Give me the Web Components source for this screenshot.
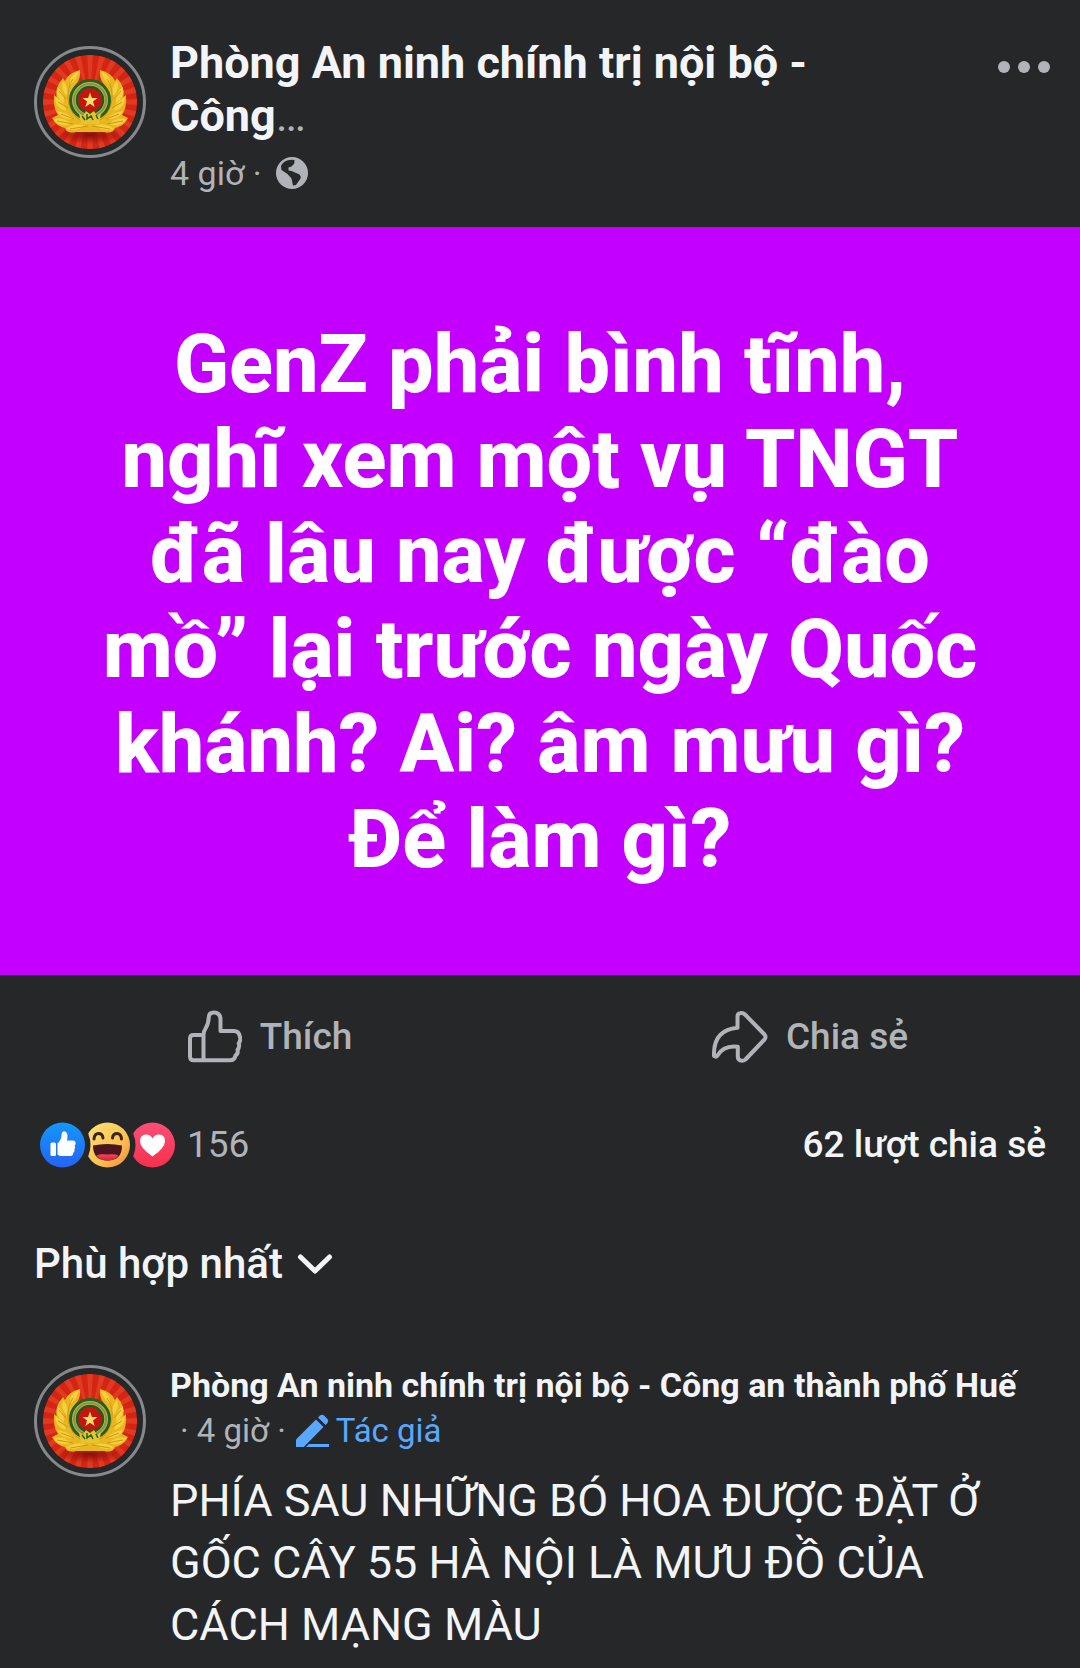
<!DOCTYPE html>
<html lang="vi">
<head>
<meta charset="utf-8">
<meta name="viewport" content="width=device-width, initial-scale=1">
<title>Phòng An ninh chính trị nội bộ</title>
<style>
  :root {
    --bg: #252728;
    --text: #f2f4f7;
    --muted: #b0b3b8;
    --link: #5aa7ff;
    --banner: #c300ff;
  }
  body {
    margin: 0;
    background: var(--bg);
    color: var(--text);
    font-family: Roboto, "Noto Sans", sans-serif;
  }
</style>
</head>
<body>

<feed-post>
  <post-header slot="header" time="4 giờ">Phòng An ninh chính trị nội bộ - Công</post-header>
  <post-banner slot="content">GenZ phải bình tĩnh, nghĩ xem một vụ TNGT đã lâu nay được “đào mồ” lại trước ngày Quốc khánh? Ai? âm mưu gì? Để làm gì?</post-banner>
  <action-button slot="actions" icon="like">Thích</action-button>
  <action-button slot="actions" icon="share">Chia sẻ</action-button>
  <reaction-summary slot="summary" count="156">62 lượt chia sẻ</reaction-summary>
  <sort-select slot="comments">Phù hợp nhất</sort-select>
  <post-comment slot="comments" author="Phòng An ninh chính trị nội bộ - Công an thành phố Huế" time="4 giờ" badge="Tác giả">PHÍA SAU NHỮNG BÓ HOA ĐƯỢC ĐẶT Ở GỐC CÂY 55 HÀ NỘI LÀ MƯU ĐỒ CỦA CÁCH MẠNG MÀU</post-comment>
</feed-post>

<script>
const RESET = `
  *, *::before, *::after { box-sizing: border-box; }
  button, select {
    margin: 0;
    padding: 0;
    border: 0;
    background: none;
    color: inherit;
    font: inherit;
    cursor: pointer;
  }
  a { color: inherit; text-decoration: none; }
  svg { display: block; flex: none; }
`

const ICONS = {
  like: `
    <svg width="54" height="54" viewBox="0 0 54 54" fill="none" stroke="currentColor" stroke-width="4" stroke-linejoin="round" stroke-linecap="round">
      <path d="M15.5 25H5.500Q2 25 2 28.500V46.500Q2 50.300 5.500 50.300H42Q46.500 50.300 47.500 45.500Q50.500 43.500 49.500 39.800Q52 37 50.700 33.400Q53.200 30 51.800 26.500Q51 21 46 21H32.500V10Q32.500 2.500 26 2.500Q21 2.500 20.800 7Q20.500 14 17.500 18.500Q15.500 21.500 15.500 25V50"/>
    </svg>`,
  share: `
    <svg width="56" height="54" viewBox="0 0 56 54" fill="none" stroke="currentColor" stroke-width="4" stroke-linejoin="round" stroke-linecap="round">
      <path d="M25.500 17.800V6.500Q25.500 3.500 28.500 3Q31 2.500 33 4.500L52.500 24.500Q54.500 27 52.500 29.500L33.500 49.500Q31 51.500 28.500 50.500Q25.800 49.500 25.800 46.500V36.700Q11.500 35 5.500 45.500Q4 47.500 2 46Q1 20 25.500 17.800Z"/>
    </svg>`,
  more: `
    <svg width="52" height="12" viewBox="0 0 52 12" fill="currentColor">
      <circle cx="6" cy="6" r="6"/><circle cx="26" cy="6" r="6"/><circle cx="46" cy="6" r="6"/>
    </svg>`,
  globe: `
    <svg width="32" height="32" viewBox="0 0 32 32">
      <circle cx="16" cy="16" r="16" fill="currentColor"/>
      <path fill="var(--bg)" d="M5 9Q6.500 5 11 3.500Q15 2.500 18.500 3L18.300 6.500L15.500 9.500L12.500 10.500V13.500L15.500 14L23.500 17.500Q25.500 19.500 24.200 22L20 28L17 28.500L15.500 21.500L11.500 17L5.500 13Z"/>
    </svg>`,
  chevron: `
    <svg width="36" height="22" viewBox="0 0 36 22" fill="none" stroke="currentColor" stroke-width="5" stroke-linecap="round" stroke-linejoin="round">
      <path d="M3.500 4L18 18L32.500 4"/>
    </svg>`,
  pencil: `
    <svg width="34" height="34" viewBox="0 0 34 34" fill="currentColor">
      <path d="M0 33V25.500L20 5.500L27.500 13L7.800 33Z"/>
      <path d="M22 3.500L24 1.500Q26 0 28 1.500L31.500 5Q33 7 31.500 9L29.500 11Z"/>
      <path d="M13 30H33V33H10Z"/>
    </svg>`
}

const REACTIONS = `
  <svg width="135" height="46" viewBox="0 0 135 46" role="img" aria-label="Thích, Haha, Yêu thích">
    <defs>
      <linearGradient id="blue" x1="0" y1="0" x2="0" y2="1">
        <stop offset="0" stop-color="#1398fb"/><stop offset="1" stop-color="#2563f3"/>
      </linearGradient>
      <linearGradient id="yellow" x1="0" y1="0" x2="1" y2="1">
        <stop offset="0" stop-color="#ffe27a"/><stop offset=".6" stop-color="#fcc352"/><stop offset="1" stop-color="#f08a35"/>
      </linearGradient>
      <linearGradient id="red" x1="0" y1="0" x2="0" y2="1">
        <stop offset="0" stop-color="#fb4f78"/><stop offset="1" stop-color="#f5304c"/>
      </linearGradient>
      <linearGradient id="tongue" x1="0" y1="0" x2="0" y2="1">
        <stop offset="0" stop-color="#f5485c"/><stop offset="1" stop-color="#d81f3c"/>
      </linearGradient>
      <mask id="cut"><path fill="#fff" d="M0 0H46V46H0Z"/><circle cx="-22.500" cy="23" r="28"/></mask>
    </defs>
    <circle cx="22.500" cy="23" r="22.500" fill="url(#blue)"/>
    <g fill="#fff">
      <rect x="10.500" y="20.500" width="5.500" height="13.500" rx="1.500"/>
      <path d="M17.500 21.500Q21.500 18 21.700 12Q22 9.300 24 9.300Q27.500 9.800 27.500 14.500Q27.500 17 26.800 18.500H33Q35.800 18.800 35.600 21.500Q35.500 23 34.600 23.600Q36 25.500 34.400 27.300Q35.200 29.500 33.300 30.700Q33.300 34 30 34H22Q19 34 17.500 32.500Z"/>
    </g>
    <g transform="translate(45 0)">
      <g mask="url(#cut)"><circle cx="22.500" cy="23" r="22.500" fill="url(#yellow)"/></g>
      <g fill="none" stroke="#3b2418" stroke-width="3" stroke-linecap="round">
        <path d="M9 17Q9.500 11.500 13.500 11.500Q17.500 11.500 18 16"/>
        <path d="M27.500 16Q28 11.500 32 11.500Q36 11.500 36.500 17"/>
      </g>
      <path fill="#4b1620" d="M8 23.500Q22.500 20.500 37 23.500Q37 38.500 22.500 38.500Q8 38.500 8 23.500Z"/>
      <path fill="url(#tongue)" d="M11.500 33.500Q15 31.500 22.500 32.500Q30 31.500 33.500 33.500Q30 38.500 22.500 38.500Q15 38.500 11.500 33.500Z"/>
    </g>
    <g transform="translate(90 0)">
      <g mask="url(#cut)"><circle cx="22.500" cy="23" r="22.500" fill="url(#red)"/></g>
      <path fill="#fff" d="M22.500 34.500Q10 26 10 19Q10.200 12.800 16 12.600Q20.500 12.600 22.500 16.500Q24.500 12.600 29 12.600Q35 12.800 35 19Q35 26 22.500 34.500Z"/>
    </g>
  </svg>`

function emblemRays() {
  let rays = ''
  for (let i = 0; i < 24; i++) {
    rays += `<path d="M57 57L54 8H60Z" transform="rotate(${i * 15} 57 57)"/>`
  }
  return rays
}

const WING = `
  <path fill="#e9b620" d="M47 25Q35 28 32 36L30 33Q22 42 23.500 52L21 50Q20 63 25 70L19 73Q23 81 32 83Q34 89 43 87H57V77Q38 71 38 54Q38 44 44 38Q48 32 47 25Z"/>
  <g fill="#f3d03f">
    <path d="M46 26Q36 30 37 40Q44 35 46 26Z"/>
    <path d="M30 36Q27 45 34 51Q36 42 30 36Z"/>
    <path d="M24 42Q22 52 31 58Q32 48 24 42Z"/>
    <path d="M22 52Q22 63 33 66Q32 57 22 52Z"/>
    <path d="M24 66Q28 75 40 74Q34 67 24 66Z"/>
    <path d="M20 74Q31 72 38 79Q27 83 20 74Z"/>
    <path d="M33 84Q40 78 52 80Q45 87 33 84Z"/>
  </g>
  <g fill="none" stroke="#cf9716" stroke-width="1">
    <path d="M40 34Q34 42 35 55Q37 70 50 77"/>
    <path d="M26 46L33 54M25 57L35 63M28 69L41 74M24 76L40 79M37 84L55 81"/>
  </g>`

class FeedPost extends HTMLElement {
  constructor() {
    super()
    this.attachShadow({ mode: 'open' })
    this.shadowRoot.innerHTML = `
      <style>
        ${RESET}
        :host { display: block; }
        .actions {
          display: grid;
          grid-template-columns: 1fr 1fr;
          padding: 32px 0;
        }
      </style>
      <article>
        <slot name="header"></slot>
        <slot name="content"></slot>
        <div class="actions"><slot name="actions"></slot></div>
        <slot name="summary"></slot>
        <section><slot name="comments"></slot></section>
      </article>
    `
  }
}

class UserAvatar extends HTMLElement {
  constructor() {
    super()
    this.attachShadow({ mode: 'open' })
    this.shadowRoot.innerHTML = `
      <style>
        ${RESET}
        :host { display: block; flex: none; }
      </style>
      <svg width="112" height="112" viewBox="1 1 112 112" aria-hidden="true">
        <defs>
          <clipPath id="disc"><circle cx="57" cy="57" r="47"/></clipPath>
          <radialGradient id="shade" cx=".5" cy=".5" r=".5">
            <stop offset="0" stop-color="#8a0f08"/><stop offset="1" stop-color="#8a0f08" stop-opacity="0"/>
          </radialGradient>
        </defs>
        <circle cx="57" cy="57" r="54.500" fill="none" stroke="#85888c" stroke-width="3"/>
        <circle cx="57" cy="57" r="47" fill="#d42412"/>
        <g clip-path="url(#disc)">
          <g fill="#e03a22">${emblemRays()}</g>
          <ellipse cx="57" cy="90" rx="34" ry="9" fill="url(#shade)"/>
        </g>
        ${WING}
        <g transform="matrix(-1 0 0 1 114 0)">${WING}</g>
        <circle cx="57" cy="55" r="19.500" fill="#c9b04a" stroke="#1f6423" stroke-width="3"/>
        <circle cx="57" cy="55" r="16" fill="none" stroke="#8b9440" stroke-width="2"/>
        <circle cx="57" cy="55" r="13" fill="#c4160f" stroke="#1f5a22" stroke-width="2.500"/>
        <path fill="#f8dc6a" d="M57 47.500L58.900 53L64.500 53L60 56.500L61.700 62L57 58.700L52.300 62L54 56.500L49.500 53L55.100 53Z"/>
        <path fill="#e9c32c" d="M46 68L50 71L53 66L57 69L61 66L64 71L68 68L66 79H48Z"/>
        <path fill="none" stroke="#23601f" stroke-width="1.500" d="M49 71L52 75M54 69V74L58 71L60 75M63 70L65 74"/>
      </svg>
    `
  }
}

class PostHeader extends HTMLElement {
  constructor() {
    super()
    this.attachShadow({ mode: 'open' })
    this.shadowRoot.innerHTML = `
      <style>
        ${RESET}
        :host {
          display: flex;
          align-items: flex-start;
          gap: 24px;
          padding: 36px 30px 33px 34px;
        }
        user-avatar { margin-top: 10px; }
        .info { flex: 1; }
        h2 {
          margin: 0 0 10px;
          max-width: 680px;
          font-size: 45px;
          line-height: 53px;
          font-weight: 700;
        }
        .rest { color: var(--muted); font-weight: 400; }
        .meta {
          display: flex;
          align-items: center;
          gap: 14px;
          color: var(--muted);
          font-size: 34px;
          line-height: 42px;
        }
        button { padding: 25px 0; color: var(--muted); }
      </style>
      <user-avatar></user-avatar>
      <div class="info">
        <h2><a href="#"><slot></slot><span class="rest">…</span></a></h2>
        <div class="meta"><span><span class="time"></span> ·</span>${ICONS.globe}</div>
      </div>
      <button type="button" aria-label="Tùy chọn khác">${ICONS.more}</button>
    `
  }

  connectedCallback() {
    this.shadowRoot.querySelector('.time').textContent = this.getAttribute('time')
  }
}

class PostBanner extends HTMLElement {
  constructor() {
    super()
    this.attachShadow({ mode: 'open' })
    this.shadowRoot.innerHTML = `
      <style>
        ${RESET}
        :host {
          display: block;
          padding: 90px 90px 88px;
          background: var(--banner);
          color: #fff;
          text-align: center;
        }
        p {
          margin: 0;
          font-size: 81px;
          line-height: 95px;
          font-weight: 800;
        }
      </style>
      <p><slot></slot></p>
    `
  }
}

class ActionButton extends HTMLElement {
  constructor() {
    super()
    this.attachShadow({ mode: 'open' })
  }

  connectedCallback() {
    this.shadowRoot.innerHTML = `
      <style>
        ${RESET}
        :host { display: flex; justify-content: center; }
        button {
          display: flex;
          align-items: center;
          gap: 18px;
          height: 60px;
          color: var(--muted);
          font-size: 37px;
          line-height: 42px;
          font-weight: 500;
        }
      </style>
      <button type="button">${ICONS[this.getAttribute('icon')]}<slot></slot></button>
    `
  }
}

class ReactionSummary extends HTMLElement {
  constructor() {
    super()
    this.attachShadow({ mode: 'open' })
    this.shadowRoot.innerHTML = `
      <style>
        ${RESET}
        :host {
          display: flex;
          align-items: center;
          justify-content: space-between;
          padding: 23px 34px 22px 40px;
          font-size: 37px;
          line-height: 46px;
        }
        .reactions {
          display: flex;
          align-items: center;
          gap: 12px;
          color: var(--muted);
        }
        .shares { font-weight: 500; }
      </style>
      <a class="reactions" href="#">${REACTIONS}<span class="count"></span></a>
      <a class="shares" href="#"><slot></slot></a>
    `
  }

  connectedCallback() {
    this.shadowRoot.querySelector('.count').textContent = this.getAttribute('count')
  }
}

class SortSelect extends HTMLElement {
  constructor() {
    super()
    this.attachShadow({ mode: 'open' })
  }

  connectedCallback() {
    // slots don't work inside <option>, so the text is copied over
    this.shadowRoot.innerHTML = `
      <style>
        ${RESET}
        :host { display: block; padding: 43px 34px 67px; }
        label {
          display: inline-flex;
          align-items: center;
          gap: 14px;
        }
        select {
          appearance: none;
          font-size: 42px;
          line-height: 62px;
          font-weight: 500;
        }
      </style>
      <label>
        <select aria-label="Sắp xếp bình luận"><option></option></select>
        ${ICONS.chevron}
      </label>
    `
    this.shadowRoot.querySelector('option').textContent = this.textContent
  }
}

class PostComment extends HTMLElement {
  constructor() {
    super()
    this.attachShadow({ mode: 'open' })
    this.shadowRoot.innerHTML = `
      <style>
        ${RESET}
        :host {
          display: flex;
          align-items: flex-start;
          gap: 24px;
          padding: 0 56px 12px 34px;
        }
        user-avatar { margin-top: 3px; }
        h3 {
          margin: 0;
          font-size: 34px;
          line-height: 46px;
          font-weight: 700;
        }
        .meta {
          display: flex;
          align-items: center;
          gap: 10px;
          padding-left: 10px;
          color: var(--muted);
          font-size: 33px;
          line-height: 46px;
        }
        .badge {
          display: flex;
          align-items: center;
          gap: 6px;
          color: var(--link);
        }
        p {
          margin: 16px 0 0;
          font-size: 45px;
          line-height: 62px;
        }
      </style>
      <user-avatar></user-avatar>
      <div>
        <h3><a class="author" href="#"></a></h3>
        <div class="meta">
          <span>· <span class="time"></span> ·</span>
          <span class="badge">${ICONS.pencil}<span class="role"></span></span>
        </div>
        <p><slot></slot></p>
      </div>
    `
  }

  connectedCallback() {
    this.shadowRoot.querySelector('.author').textContent = this.getAttribute('author')
    this.shadowRoot.querySelector('.time').textContent = this.getAttribute('time')
    this.shadowRoot.querySelector('.role').textContent = this.getAttribute('badge')
  }
}

customElements.define('user-avatar', UserAvatar)
customElements.define('feed-post', FeedPost)
customElements.define('post-header', PostHeader)
customElements.define('post-banner', PostBanner)
customElements.define('action-button', ActionButton)
customElements.define('reaction-summary', ReactionSummary)
customElements.define('sort-select', SortSelect)
customElements.define('post-comment', PostComment)
</script>
</body>
</html>
